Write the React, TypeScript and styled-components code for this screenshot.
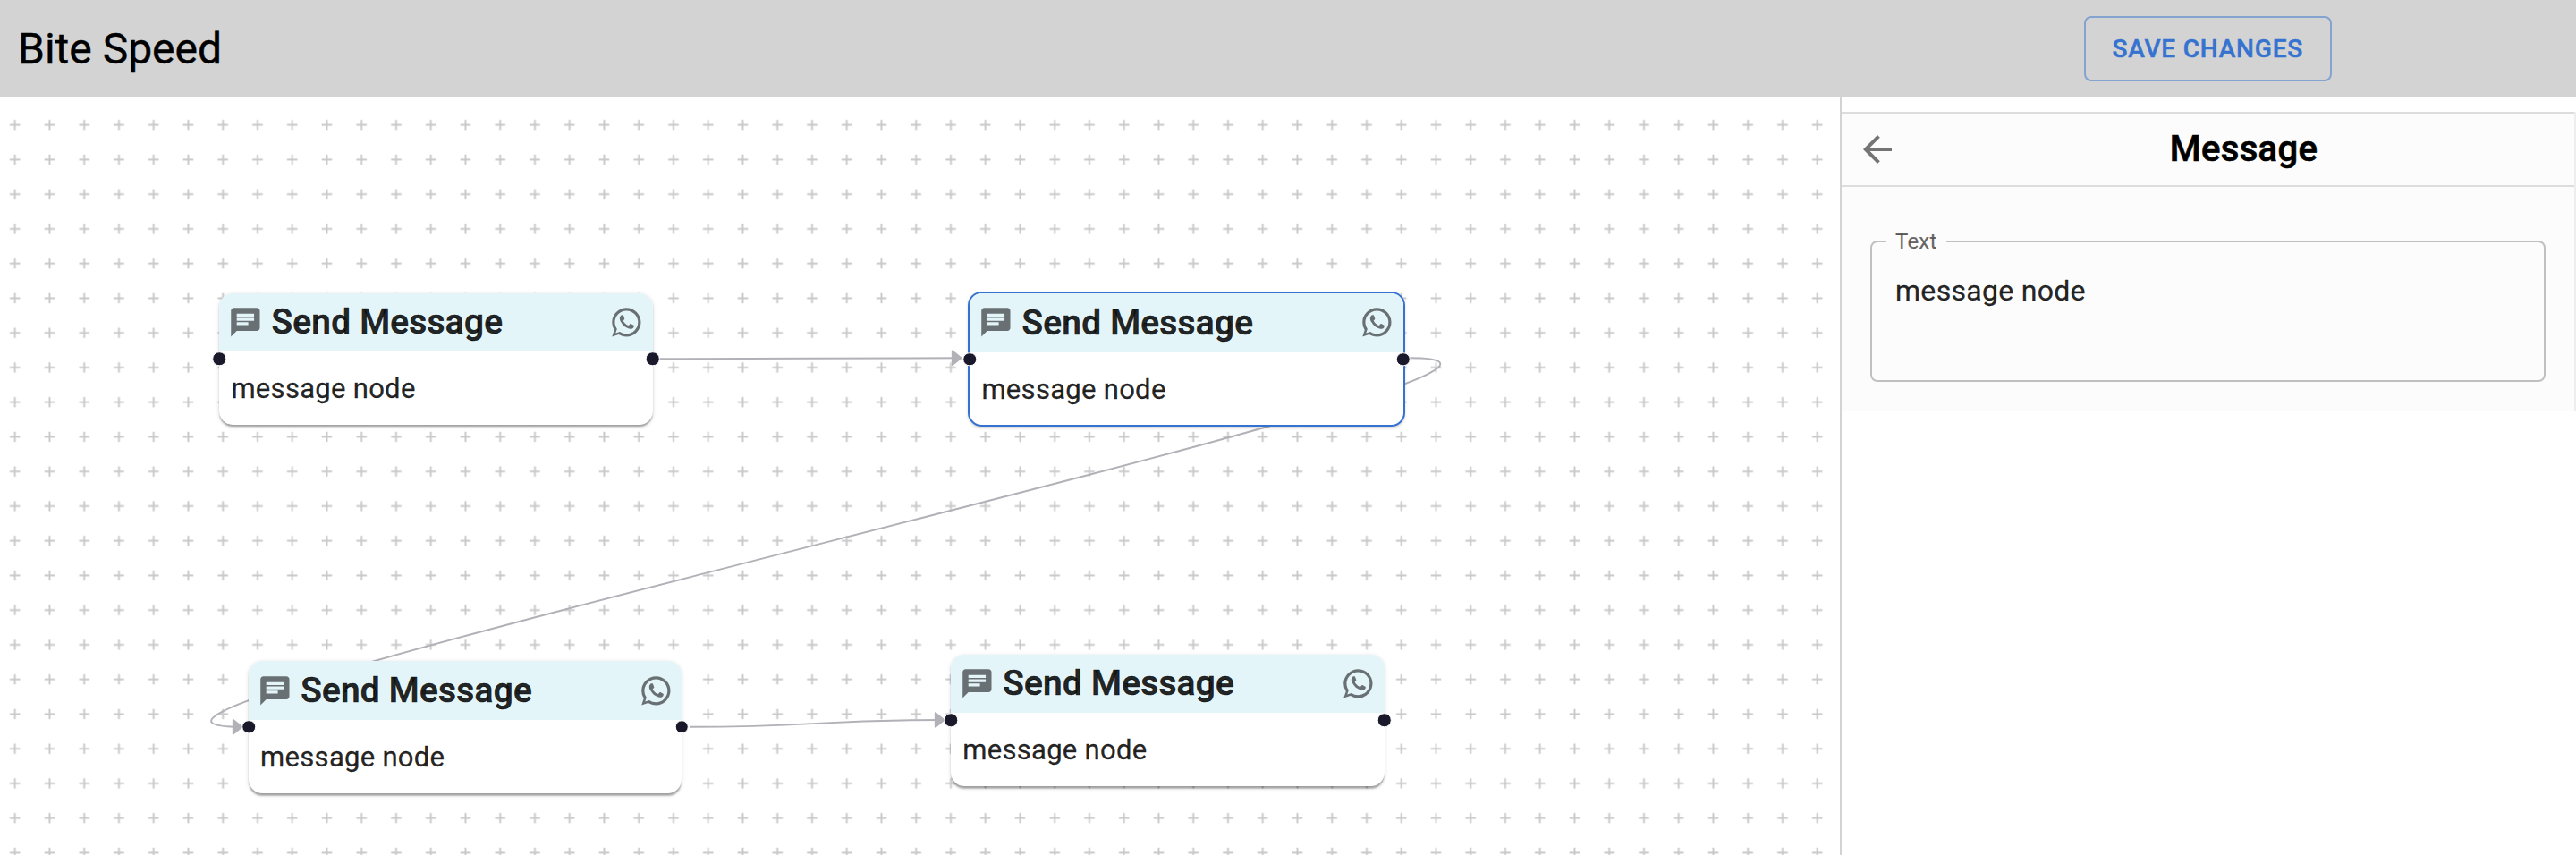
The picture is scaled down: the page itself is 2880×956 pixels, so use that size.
import React from "react";
import styled, { createGlobalStyle, css } from "styled-components";

const GlobalStyle = createGlobalStyle`
  *, *::before, *::after { box-sizing: border-box; }
  body {
    margin: 0;
    background: #fff;
    font-family: Roboto, "Liberation Sans", sans-serif;
    -webkit-font-smoothing: antialiased;
  }
`;

const Page = styled.div`
  display: flex;
  flex-direction: column;
  width: 100%;
  height: 100vh;
  overflow: hidden;
`;

const TopBar = styled.header`
  display: flex;
  align-items: center;
  justify-content: space-between;
  flex: none;
  height: 109px;
  padding: 0 273px 0 20px;
  background: #d3d3d3;
`;

const Brand = styled.h1`
  margin: 0;
  font-size: 48px;
  font-weight: 400;
  line-height: 64px;
  color: #000;
  -webkit-text-stroke: 0.4px currentColor;
`;

const SaveButton = styled.button`
  padding: 10px 30px;
  border: 2px solid rgba(54, 115, 208, 0.5);
  border-radius: 8px;
  background: transparent;
  color: #3673d0;
  font-family: inherit;
  font-size: 28px;
  font-weight: 500;
  line-height: 49px;
  letter-spacing: 0.02857em;
  text-transform: uppercase;
  -webkit-text-stroke: 0.5px currentColor;
`;

const Workspace = styled.main`
  display: flex;
  flex: 1;
  min-height: 0;
`;

const Canvas = styled.section`
  position: relative;
  flex: 1;
  min-width: 0;
  overflow: hidden;
`;

const Drawing = styled.svg`
  display: block;
  width: 100%;
  height: 100%;
`;

const Node = styled.article<{ $x: number; $y: number; $selected?: boolean }>`
  position: absolute;
  left: ${(p) => p.$x}px;
  top: ${(p) => p.$y}px;
  width: 484.4px;
  height: 147.4px;
  border-radius: 15.5px;
  background: #fff;
  color: rgba(0, 0, 0, 0.87);
  box-shadow: 0 3.9px 1.9px -1.9px rgba(0, 0, 0, 0.2),
    0 1.9px 1.9px rgba(0, 0, 0, 0.14), 0 1.9px 5.8px rgba(0, 0, 0, 0.12);
  ${(p) =>
    p.$selected &&
    css`
      box-sizing: content-box;
      border: 2px solid #3673d0;
      box-shadow: 0 1.9px 3px rgba(0, 0, 0, 0.14);
    `}
`;

const NodeHeader = styled.div<{ $selected?: boolean }>`
  display: flex;
  align-items: center;
  gap: 9.7px;
  height: 65.5px;
  padding: 0 9.7px;
  border-radius: ${(p) => (p.$selected ? "13.5px 13.5px 0 0" : "15.5px 15.5px 0 0")};
  background: #e4f5fa;
`;

const NodeTitle = styled.h2`
  flex: 1;
  margin: 0;
  font-size: 38.74px;
  font-weight: 500;
  line-height: 62px;
  letter-spacing: 0.0075em;
  -webkit-text-stroke: 0.7px currentColor;
`;

const NodeText = styled.p`
  margin: 0;
  padding: 13px 13px 0;
  font-size: 31px;
  line-height: 58px;
  letter-spacing: 0.00938em;
  -webkit-text-stroke: 0.3px currentColor;
`;

const Handle = styled.span<{ $side: "left" | "right" }>`
  position: absolute;
  top: 50%;
  ${(p) => p.$side}: 0;
  width: 15.5px;
  height: 15.5px;
  border: 1.9px solid #fff;
  border-radius: 50%;
  background: #1a192b;
  transform: translate(${(p) => (p.$side === "left" ? "-50%" : "50%")}, -50%);
`;

const Icon = styled.svg<{ $size: number }>`
  flex: none;
  width: ${(p) => p.$size}px;
  height: ${(p) => p.$size}px;
  fill: rgba(0, 0, 0, 0.54);
`;

const SidePanel = styled.aside`
  flex: none;
  width: 823px;
  padding-top: 16px;
  border-left: 2px solid #d3d3d3;
`;

const Settings = styled.div`
  height: 334px;
  border-right: 2px solid #eee;
  background: #fcfcfc;
`;

const SettingsHeader = styled.div`
  display: flex;
  align-items: center;
  height: 84px;
  border-top: 2px solid #ddd;
  border-bottom: 2px solid #ddd;
`;

const BackButton = styled.button`
  display: flex;
  padding: 16px;
  border: 0;
  background: none;
`;

const SettingsTitle = styled.h2`
  flex: 1;
  margin: 0;
  font-size: 40px;
  font-weight: 500;
  line-height: 64px;
  letter-spacing: 0.0075em;
  text-align: center;
  color: #000;
  -webkit-text-stroke: 0.7px currentColor;
`;

const FieldArea = styled.div`
  padding: 48px 32px 0;
`;

const Field = styled.fieldset`
  min-width: 0;
  height: 170px;
  margin: 0;
  padding: 0 26px;
  border: 2px solid #c0c0c0;
  border-radius: 8px;
`;

const FieldLabel = styled.legend`
  margin-left: -10px;
  padding: 0 10px;
  font-size: 24px;
  line-height: 26px;
  letter-spacing: 0.00938em;
  color: rgba(0, 0, 0, 0.6);
  -webkit-text-stroke: 0.2px currentColor;
`;

const FieldValue = styled.div`
  padding-top: 19px;
  font-size: 32px;
  line-height: 46px;
  letter-spacing: 0.00938em;
  color: rgba(0, 0, 0, 0.87);
  -webkit-text-stroke: 0.3px currentColor;
`;

const ChatIcon = () => (
  <Icon $size={38.74} viewBox="0 0 24 24">
    <path d="M20 2H4c-1.1 0-1.99.9-1.99 2L2 22l4-4h14c1.1 0 2-.9 2-2V4c0-1.1-.9-2-2-2zM6 9h12v2H6V9zm8 5H6v-2h8v2zm4-6H6V6h12v2z" />
  </Icon>
);

const WhatsAppIcon = () => (
  <Icon $size={38.74} viewBox="0 0 24 24">
    <path d="M16.75 13.96c.25.13.41.2.46.3.06.11.04.61-.21 1.18-.2.56-1.24 1.1-1.7 1.12-.46.02-.47.36-2.96-.73-2.49-1.09-3.99-3.75-4.11-3.92-.12-.17-.96-1.38-.92-2.61.05-1.22.69-1.8.95-2.04.24-.26.51-.29.68-.26h.47c.15 0 .36-.06.55.45l.69 1.87c.06.13.1.28.01.44l-.27.41-.39.42c-.12.12-.26.25-.12.5.12.26.62 1.09 1.32 1.78.91.88 1.71 1.17 1.95 1.3.24.14.39.12.54-.04l.81-.94c.19-.25.35-.19.58-.11l1.67.88M12 2a10 10 0 0 1 10 10 10 10 0 0 1-10 10c-1.97 0-3.8-.57-5.35-1.55L2 22l1.55-4.65A9.969 9.969 0 0 1 2 12 10 10 0 0 1 12 2m0 2a8 8 0 0 0-8 8c0 1.72.54 3.31 1.46 4.61L4.5 19.5l2.89-.96A7.95 7.95 0 0 0 12 20a8 8 0 0 0 8-8 8 8 0 0 0-8-8z" />
  </Icon>
);

const BackIcon = () => (
  <Icon $size={48} viewBox="0 0 24 24">
    <path d="M20 11H7.83l5.59-5.59L12 4l-8 8 8 8 1.41-1.41L7.83 13H20v-2z" />
  </Icon>
);

type NodeData = { id: string; x: number; y: number; text: string; selected?: boolean };

const nodes: NodeData[] = [
  { id: "n1", x: 245.4, y: 218.7, text: "message node" },
  { id: "n2", x: 1082.4, y: 217, text: "message node", selected: true },
  { id: "n3", x: 278.1, y: 630.3, text: "message node" },
  { id: "n4", x: 1063.2, y: 622.5, text: "message node" },
];

const edges = [
  "M737.5 292.3C906 292.3 906 291.3 1074.5 291.3",
  "M1576 291.3C1888 291.3 -42 703.8 270.5 703.8",
  "M771 703.8C913 703.8 913 696 1055.5 696",
];

const GRID = 38.75;

function MessageNode({ x, y, text, selected }: NodeData) {
  return (
    <Node $x={x} $y={y} $selected={selected}>
      <NodeHeader $selected={selected}>
        <ChatIcon />
        <NodeTitle>Send Message</NodeTitle>
        <WhatsAppIcon />
      </NodeHeader>
      <NodeText>{text}</NodeText>
      <Handle $side="left" />
      <Handle $side="right" />
    </Node>
  );
}

export default function App() {
  return (
    <Page>
      <GlobalStyle />
      <TopBar>
        <Brand>Bite Speed</Brand>
        <SaveButton>Save Changes</SaveButton>
      </TopBar>
      <Workspace>
        <Canvas>
          <Drawing>
            <defs>
              <pattern id="grid" x={-2.65} y={11.3} width={GRID} height={GRID} patternUnits="userSpaceOnUse">
                <path d="M19.37 13.56V25.18M13.56 19.37H25.18" stroke="#c9c9c9" strokeWidth="1.94" />
              </pattern>
              <marker
                id="arrow"
                viewBox="-10 -10 20 20"
                refX="0"
                refY="0"
                markerWidth="38.74"
                markerHeight="38.74"
                markerUnits="userSpaceOnUse"
                orient="auto-start-reverse"
              >
                <polyline
                  points="-5,-4 0,0 -5,4 -5,-4"
                  fill="#b1b1b7"
                  stroke="#b1b1b7"
                  strokeWidth="1"
                  strokeLinecap="round"
                  strokeLinejoin="round"
                />
              </marker>
            </defs>
            <rect width="100%" height="100%" fill="url(#grid)" />
            {edges.map((d) => (
              <path key={d} d={d} fill="none" stroke="#b1b1b7" strokeWidth="1.94" markerEnd="url(#arrow)" />
            ))}
          </Drawing>
          {nodes.map((n) => (
            <MessageNode key={n.id} {...n} />
          ))}
        </Canvas>
        <SidePanel>
          <Settings>
            <SettingsHeader>
              <BackButton aria-label="Back">
                <BackIcon />
              </BackButton>
              <SettingsTitle>Message</SettingsTitle>
            </SettingsHeader>
            <FieldArea>
              <Field>
                <FieldLabel>Text</FieldLabel>
                <FieldValue>message node</FieldValue>
              </Field>
            </FieldArea>
          </Settings>
        </SidePanel>
      </Workspace>
    </Page>
  );
}
